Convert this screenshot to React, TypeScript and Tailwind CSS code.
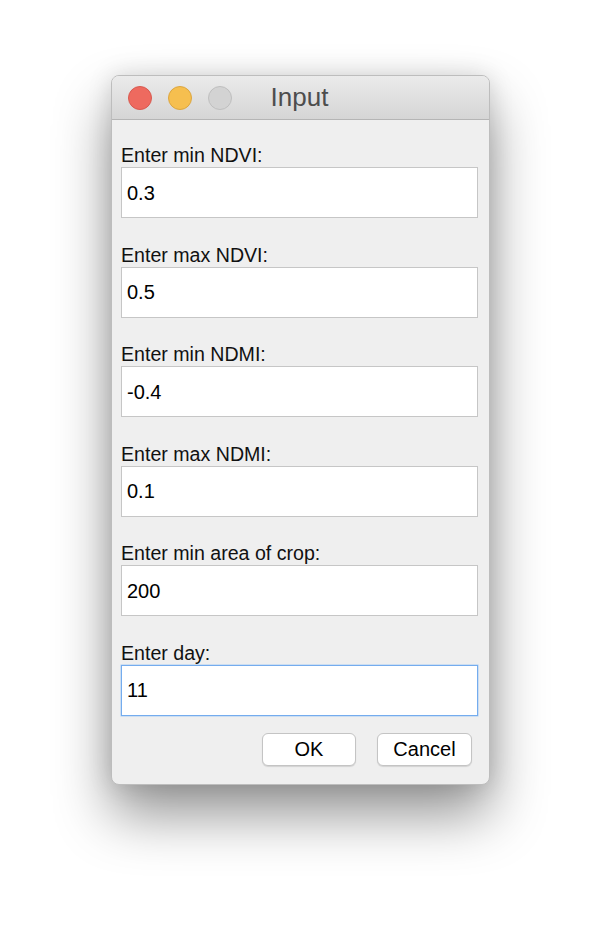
import React from "react"

const fields = [
  { label: "Enter min NDVI:", value: "0.3" },
  { label: "Enter max NDVI:", value: "0.5" },
  { label: "Enter min NDMI:", value: "-0.4" },
  { label: "Enter max NDMI:", value: "0.1" },
  { label: "Enter min area of crop:", value: "200" },
  { label: "Enter day:", value: "11", focused: true },
]

function TrafficLight({ className }: { className: string }) {
  return <div className={`w-[24px] h-[24px] rounded-full border ${className}`} />
}

export default function App() {
  return (
    <div
      className="w-[602px] h-[934px] bg-white pt-[75px] pl-[111px]"
      style={{ fontFamily: '"Liberation Sans", Arial, sans-serif' }}
    >
      <div className="w-[379px] h-[710px] rounded-[8px] border border-[#bdbdbd] bg-[#efefef] overflow-hidden flex flex-col shadow-[0_30px_55px_rgba(0,0,0,0.42),0_0_24px_rgba(0,0,0,0.13)]">
        {/* title bar */}
        <div className="h-[44px] shrink-0 grid grid-cols-[1fr_auto_1fr] items-center bg-gradient-to-b from-[#ebebeb] to-[#d5d5d5] border-b border-[#b5b5b5]">
          <div className="flex items-center gap-[16px] pl-[16px]">
            <TrafficLight className="bg-[#ee6a5f] border-[#d85a50]" />
            <TrafficLight className="bg-[#f6bf4f] border-[#dca640]" />
            <TrafficLight className="bg-[#d3d3d3] border-[#bfbfbf]" />
          </div>
          <div className="text-[26px] leading-none text-[#4d4d4d] pb-[1px] pr-[2px]">Input</div>
          <div />
        </div>

        {/* form */}
        <div className="flex-1 flex flex-col pt-[24px] pl-[9px] pr-[11px]">
          <div className="flex flex-col gap-[25.6px]">
            {fields.map((f) => (
              <div key={f.label} className="flex flex-col">
                <label className="text-[19.6px] leading-[23px] text-[#111]">{f.label}</label>
                <div
                  className={
                    f.focused
                      ? "h-[51px] bg-white border border-[#74acee] shadow-[0_0_0_0.5px_#a9cdf5] flex items-center pl-[5px] text-[20px] text-black"
                      : "h-[51px] bg-white border border-[#c6c6c6] flex items-center pl-[5px] text-[20px] text-black"
                  }
                >
                  {f.value}
                </div>
              </div>
            ))}
          </div>

          <div className="flex justify-end gap-[21px] mt-[17px] pr-[6px]">
            <button className="w-[94px] h-[33px] rounded-[6px] bg-white border border-[#c4c4c4] shadow-[0_1px_1px_rgba(0,0,0,0.12)] text-[20px] text-black">
              OK
            </button>
            <button className="w-[95px] h-[33px] rounded-[6px] bg-white border border-[#c4c4c4] shadow-[0_1px_1px_rgba(0,0,0,0.12)] text-[20px] text-black">
              Cancel
            </button>
          </div>
        </div>
      </div>
    </div>
  )
}
